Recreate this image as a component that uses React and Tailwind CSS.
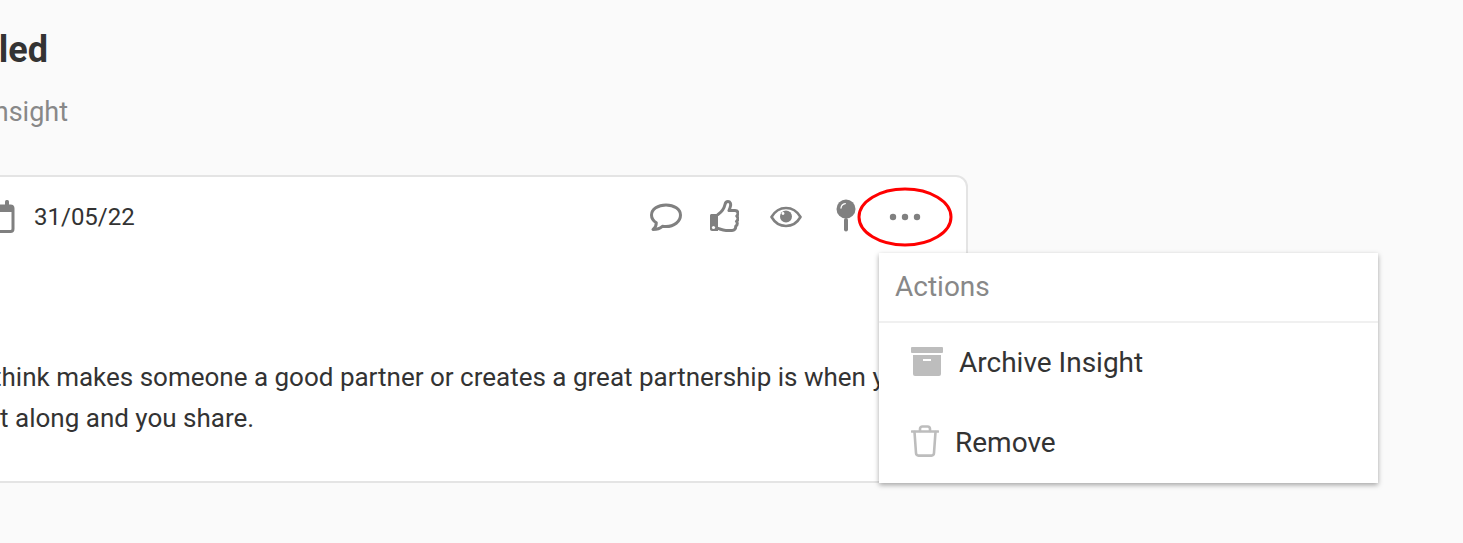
import React from 'react';

const CommentIcon = () => (
  <svg width="32" height="28" viewBox="0 0 32 28" fill="none" stroke="#808080" strokeWidth="3" strokeLinejoin="round">
    <path d="M16 2C8 2 1.500 6.200 1.500 12c0 3.200 2 6 4.800 7.800 0 2.800-1.300 5.300-3.300 6.700 3.700 0 7-1 9.400-3.200 1.100.2 2.400.3 3.600.3 8 0 14.500-5 14.500-11.600C30.500 6.200 24 2 16 2Z" />
  </svg>
);

const ThumbIcon = () => (
  <svg width="30" height="32" viewBox="0 0 30 32" fill="none">
    <path d="M1 15.500c0-1 .8-1.500 1.500-1.500H9v17H3c-1.200 0-2-.8-2-2Z" fill="#808080" />
    <circle cx="4.500" cy="27.500" r="1.600" fill="#fff" />
    <path d="M9 14.500c3-2 6-5.500 7-10 .4-2 1.500-3 3-3 2.200 0 3 2.200 2.500 4.500-.4 1.800-1 3.200-1.500 4.500h6c2 0 3 1.400 3 3 0 1.200-.6 2-1.200 2.600.7.600 1.200 1.500 1.200 2.500 0 1.300-.7 2.200-1.500 2.800.5.600.8 1.300.8 2.200 0 1.300-.7 2.200-1.600 2.700.2 2.400-1.200 4.100-3.700 4.100h-6c-3 0-5-1-8-2" stroke="#808080" strokeWidth="3" strokeLinejoin="round" strokeLinecap="round" />
  </svg>
);

const EyeIcon = () => (
  <svg width="32" height="22" viewBox="0 0 32 22" fill="none">
    <path d="M1.500 11C5 5 10 2 16 2s11 3 14.500 9C27 17 22 20 16 20S5 17 1.500 11Z" stroke="#808080" strokeWidth="2.600" strokeLinejoin="round" />
    <circle cx="16" cy="10.500" r="6" fill="#808080" />
    <circle cx="13" cy="7.500" r="1.400" fill="#fff" />
  </svg>
);

const PinIcon = () => (
  <svg width="20" height="33" viewBox="0 0 20 33">
    <circle cx="10" cy="10" r="9.500" fill="#808080" />
    <path d="M5 9c.3-2.400 2-4 4.300-4.300" stroke="#fff" strokeWidth="1.300" fill="none" strokeLinecap="round" />
    <rect x="8" y="19" width="4" height="13.500" rx="2" fill="#808080" />
  </svg>
);

const DotsIcon = () => (
  <svg width="32" height="8" viewBox="0 0 32 8" fill="#808080">
    <circle cx="4" cy="4" r="3.200" />
    <circle cx="16" cy="4" r="3.200" />
    <circle cx="28" cy="4" r="3.200" />
  </svg>
);

const CalendarIcon = () => (
  <svg width="30" height="33" viewBox="0 0 30 33" fill="none">
    <rect x="2" y="6" width="26" height="25.500" rx="2.500" stroke="#808080" strokeWidth="3" />
    <rect x="2" y="5" width="26" height="7" fill="#808080" />
    <rect x="20" y="0" width="4" height="8" rx="1.500" fill="#808080" />
    <rect x="6" y="0" width="4" height="8" rx="1.500" fill="#808080" />
  </svg>
);

const ArchiveIcon = () => (
  <svg width="32" height="29" viewBox="0 0 32 29" fill="#bdbdbd">
    <rect x="0" y="0" width="32" height="6" rx="1" />
    <path d="M2 8h28v19a2 2 0 0 1-2 2H4a2 2 0 0 1-2-2Z" />
    <rect x="12" y="12" width="8" height="2" fill="#fff" />
  </svg>
);

const TrashIcon = () => (
  <svg width="28" height="32" viewBox="0 0 28 32" fill="none" stroke="#bdbdbd" strokeWidth="2.600" strokeLinejoin="round" strokeLinecap="round">
    <path d="M1 6.500h26" />
    <path d="M9 6V4c0-1.500 1-2.500 2.500-2.500h5C18 1.500 19 2.500 19 4v2" />
    <path d="M3.500 7l1.500 21c.1 1.600 1 2.600 2.500 2.600h13c1.500 0 2.400-1 2.500-2.600l1.500-21" />
  </svg>
);

const App = () => {
  return (
    <div className="relative w-[1463px] h-[543px] overflow-hidden bg-[#fafafa] text-[#333] font-['Roboto',sans-serif]">
      <div className="ml-[-300px] w-[1268px]">
        <h1 className="w-[348px] pt-[28px] text-right text-[36px] leading-[44px] font-bold">Untitled</h1>
        <p className="w-[368px] mt-[22px] text-right text-[27px] leading-[36px] text-[#888]">Insight</p>

        {/* Card */}
        <div className="relative mt-[45px] bg-white border-2 border-[#e4e4e4] rounded-tr-[12px] rounded-br-[4px]">
          <div className="flex items-center justify-between h-[80px] pl-[283px] pr-[45px]">
            <div className="flex items-center gap-[19px]">
              <span className="mb-[2px]"><CalendarIcon /></span>
              <span className="text-[24px]">31/05/22</span>
            </div>
            <div className="flex items-center">
              <CommentIcon />
              <span className="ml-[27px] mb-[2px]"><ThumbIcon /></span>
              <span className="ml-[31px]"><EyeIcon /></span>
              <span className="ml-[34px] mb-[4px]"><PinIcon /></span>
              <span className="ml-[33px]"><DotsIcon /></span>
            </div>
          </div>
          <p className="mt-[100px] pb-[42px] pl-[211px] text-[26px] leading-[41px] whitespace-nowrap overflow-hidden">
            What I think makes someone a good partner or creates a great partnership is when you can
            <br />
            both get along and you share.
          </p>
        </div>
      </div>

      {/* Highlight */}
      <svg className="absolute left-[857px] top-[187px]" width="96" height="60" viewBox="0 0 96 60" fill="none">
        <ellipse cx="48" cy="30" rx="46" ry="28" stroke="#ff0000" strokeWidth="3" />
      </svg>

      {/* Actions menu */}
      <div className="absolute left-[879px] top-[253px] w-[499px] bg-white shadow-[0_2px_5px_rgba(0,0,0,0.35)]">
        <div className="flex items-center h-[70px] pl-[16px] text-[28px] text-[#888] border-b-2 border-[#f0f0f0]">Actions</div>
        <div className="flex items-center h-[80px] pl-[32px] gap-[16px] text-[28px]">
          <span className="mb-[4px]"><ArchiveIcon /></span>
          <span>Archive Insight</span>
        </div>
        <div className="flex items-center h-[80px] pl-[32px] gap-[16px] text-[28px]">
          <span className="mb-[4px]"><TrashIcon /></span>
          <span>Remove</span>
        </div>
      </div>
    </div>
  );
};

export default App;
